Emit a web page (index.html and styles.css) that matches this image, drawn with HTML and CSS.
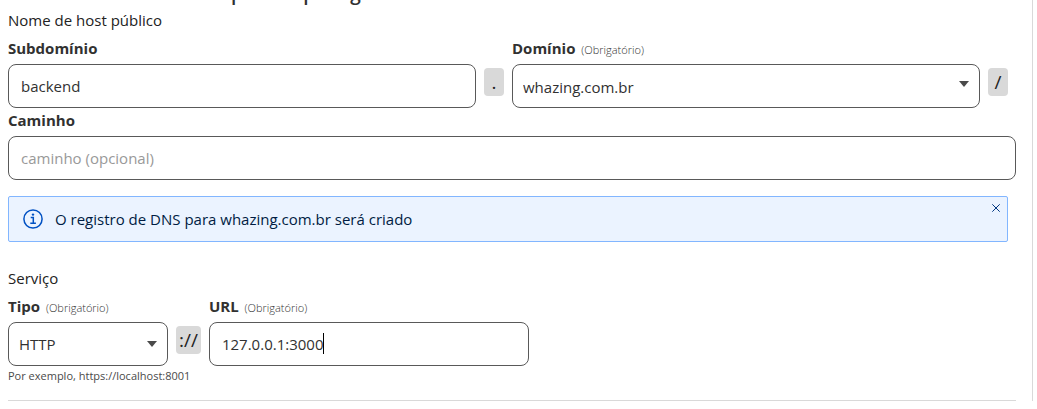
FILE: index.html
```html
<!DOCTYPE html>
<html lang="pt-BR">
<head>
<meta charset="utf-8">
<title>Nome de host público</title>
<link rel="stylesheet" href="styles.css">
</head>
<body>
<main class="panel">
  <h1 class="title">Adicionar nome de host público para g</h1>
  <form class="form">
    <section>
      <h2 class="section-title">Nome de host público</h2>
      <div class="row">
        <div class="field field-grow">
          <label class="label" for="sub">Subdomínio</label>
          <input class="control" id="sub" type="text" value="backend">
        </div>
        <span class="chip">.</span>
        <div class="field field-grow">
          <label class="label" for="domain">Domínio <span class="required">(Obrigatório)</span></label>
          <div class="select-wrap">
            <select class="control select select-domain" id="domain"><option>whazing.com.br</option></select>
            <svg class="arrow arrow-domain" viewBox="0 0 10 6" aria-hidden="true"><path d="M0 0h10L5 6z"/></svg>
          </div>
        </div>
        <span class="chip">/</span>
      </div>
      <div class="field">
        <label class="label" for="path">Caminho</label>
        <input class="control" id="path" type="text" placeholder="caminho (opcional)">
      </div>
    </section>
    <div class="alert" role="status">
      <svg class="info" viewBox="0 0 20 20" aria-hidden="true">
        <circle cx="10" cy="10" r="9.1"/>
        <path d="M7.7 8.6h2.6v5.6M7.3 14.2h5.6"/>
        <circle class="info-dot" cx="10" cy="5.6" r="1.2"/>
      </svg>
      <p class="alert-text">O registro de DNS para whazing.com.br será criado</p>
      <button class="close" type="button" aria-label="Fechar">
        <svg class="close-icon" viewBox="0 0 8 8" aria-hidden="true"><path d="M0.3 0.3l7.4 7.4M7.7 0.3L0.3 7.7"/></svg>
      </button>
    </div>
    <section class="service">
      <h2 class="section-title">Serviço</h2>
      <div class="row">
        <div class="field field-type">
          <label class="label" for="type">Tipo <span class="required">(Obrigatório)</span></label>
          <div class="select-wrap">
            <select class="control select" id="type"><option>HTTP</option></select>
            <svg class="arrow" viewBox="0 0 10 6" aria-hidden="true"><path d="M0 0h10L5 6z"/></svg>
          </div>
        </div>
        <span class="chip">://</span>
        <div class="field field-url">
          <label class="label" for="url">URL <span class="required">(Obrigatório)</span></label>
          <div class="select-wrap">
            <input class="control" id="url" type="text" value="127.0.0.1:3000">
            <span class="caret"></span>
          </div>
        </div>
      </div>
      <p class="hint">Por exemplo, https://localhost:8001</p>
    </section>
  </form>
</main>
</body>
</html>
```
FILE: styles.css
```css
* { box-sizing: border-box; }
html { overflow: hidden; }
body {
  margin: 0;
  background: #fff;
  color: #313131;
  font: 15px/24px "Open Sans", "Noto Sans", sans-serif;
}
.panel {
  min-height: 100vh;
  margin-right: 4px;
  padding: 0 16px 0 8px;
  border-right: 1px solid #d9d9d9;
}
.title {
  margin: -19px 0 3px;
  font-size: 19px;
  line-height: 24px;
  font-weight: 600;
}
.form { border-bottom: 1px solid #d9d9d9; padding-bottom: 16px; }
.section-title { margin: 0; font-size: 15px; font-weight: 400; line-height: 24px; color: #222; }
.section-title + .row { margin-top: 8px; }
.row { display: flex; align-items: flex-end; gap: 8px; padding-right: 8px; }
.field { min-width: 0; }
.field-grow { flex: 1; }
.field-type { width: 160px; }
.field-url { width: 320px; }
.label { display: block; height: 24px; line-height: 16px; font-weight: 700; }
.row + .field { padding-top: 4px; }
.required { margin-left: 2px; font-size: 11px; font-weight: 300; color: #313131; }
.control {
  display: block;
  width: 100%;
  height: 44px;
  padding: 0 12px;
  border: 1px solid #595959;
  border-radius: 8px;
  background: #fff;
  color: #313131;
  font: inherit;
}
.control::placeholder { color: #999; opacity: 1; }
.select { appearance: none; padding: 0 28px 0 10px; }
.select-domain { padding-top: 2px; }
.select-wrap { position: relative; }
.arrow {
  position: absolute;
  top: 19px;
  right: 11px;
  width: 10px;
  height: 6px;
  fill: #4a4a4a;
  pointer-events: none;
}
.arrow-domain { top: 17px; }
.chip {
  min-width: 20px;
  height: 28px;
  margin-bottom: 12px;
  padding: 0 3px;
  border-radius: 4px;
  background: #d9d9d9;
  color: #222;
  font-size: 19px;
  line-height: 28px;
  text-align: center;
}
.caret {
  position: absolute;
  top: 11px;
  left: 114px;
  width: 1px;
  height: 21px;
  background: #000;
}
.alert {
  position: relative;
  display: flex;
  align-items: center;
  gap: 12px;
  margin: 16px 8px 0 0;
  padding: 10px 32px 10px 14px;
  border: 1px solid #82b6ff;
  border-radius: 2px;
  background: #ebf3ff;
  color: #001c43;
}
.info { width: 20px; height: 20px; fill: none; stroke: #0051c3; stroke-width: 1.5; }
.info .info-dot { fill: #0051c3; stroke: none; }
.alert-text { margin: 0; }
.close {
  position: absolute;
  top: 3px;
  right: 3px;
  display: grid;
  place-items: center;
  width: 16px;
  height: 16px;
  padding: 0;
  border: 0;
  background: none;
}
.close-icon { width: 8px; height: 8px; fill: none; stroke: #003681; }
.service { margin-top: 24px; }
.hint { margin: 2px 0 0; font-size: 11px; line-height: 16px; color: #4a4a4a; }
```
